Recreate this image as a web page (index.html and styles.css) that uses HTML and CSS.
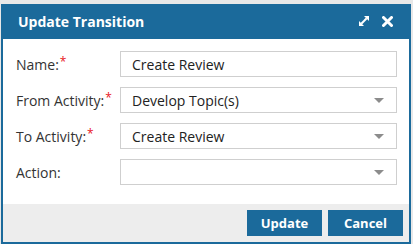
FILE: index.html
```html
<!DOCTYPE html>
<html lang="en">
<head>
  <meta charset="utf-8" />
  <title>Update Transition</title>
  <link rel="stylesheet" href="styles.css">
</head>
<body>
  <div class="dialog">
    <div class="dialog-head">
      <span class="dialog-title">Update Transition</span>
      <span class="head-tools">
        <svg class="ico-expand" width="11" height="11" viewBox="0 0 11 11">
          <polygon points="5.5,0 11,0 11,5.5" fill="#fff"/>
          <polygon points="0,5.5 0,11 5.5,11" fill="#fff"/>
          <line x1="2.5" y1="8.5" x2="8.5" y2="2.5" stroke="#fff" stroke-width="2.2"/>
        </svg>
        <svg class="ico-close" width="11" height="11" viewBox="0 0 11 11">
          <path d="M1.5 1.5 L9.5 9.5 M9.5 1.5 L1.5 9.5" stroke="#fff" stroke-width="3" stroke-linecap="round"/>
        </svg>
      </span>
    </div>

    <div class="dialog-body">
      <div class="row">
        <label class="lbl">Name:<span class="req">*</span></label>
        <div class="field"><span class="val">Create Review</span></div>
      </div>
      <div class="row">
        <label class="lbl">From Activity:<span class="req">*</span></label>
        <div class="field"><span class="val">Develop Topic(s)</span><span class="caret"></span></div>
      </div>
      <div class="row">
        <label class="lbl">To Activity:<span class="req">*</span></label>
        <div class="field"><span class="val">Create Review</span><span class="caret"></span></div>
      </div>
      <div class="row">
        <label class="lbl">Action:</label>
        <div class="field"><span class="val"></span><span class="caret"></span></div>
      </div>
    </div>

    <div class="dialog-foot">
      <button type="button" class="btn">Update</button>
      <button type="button" class="btn">Cancel</button>
    </div>
  </div>
</body>
</html>
```

FILE: styles.css
```css
*{box-sizing:border-box;font-family:"Open Sans",sans-serif;}
body{margin:0;background:#e8e8e8;padding:4px 2px 0 1px;}
.dialog{
  width:410px;
  border:2px solid #1b6a9b;
  border-top:0;
  background:#fff;
}
.dialog-head{
  height:35px;
  margin:0 -2px;
  background:#1b6a9b;
  color:#fff;
  display:flex;
  align-items:center;
  justify-content:space-between;
  padding:0 18px 0 17px;
}
.dialog-title{font-size:14px;font-weight:700;}
.head-tools{display:flex;align-items:center;gap:13px;}
.ico-expand{width:10px;height:10px;margin-top:-1px;}
.ico-close{width:11px;height:11px;}

.dialog-body{
  padding:12px 10px 19px 13px;
  display:flex;
  flex-direction:column;
  gap:10px;
}
.row{display:flex;align-items:center;height:26px;}
.lbl{
  width:104px;
  font-size:14px;
  color:#333;
  white-space:nowrap;
}
.req{
  color:#e8141c;
  font-size:12px;
  position:relative;
  top:-4px;
  margin-left:1px;
}
.field{
  width:277px;
  height:26px;
  border:1px solid #cfcfcf;
  display:flex;
  align-items:center;
  padding:0 12px 0 11px;
}
.val{flex:1;font-size:14px;color:#222;}
.caret{
  width:0;height:0;
  border-left:5px solid transparent;
  border-right:5px solid transparent;
  border-top:5px solid #8c8c8c;
}

.dialog-foot{
  background:#ededed;
  height:38px;
  display:flex;
  justify-content:flex-end;
  align-items:center;
  gap:6px;
  padding:0 6px;
}
.btn{
  width:75px;
  height:26px;
  border:0;
  background:#1b6a9b;
  color:#fff;
  font-size:13px;
  font-weight:700;
  padding:0;
  cursor:pointer;
}
```
